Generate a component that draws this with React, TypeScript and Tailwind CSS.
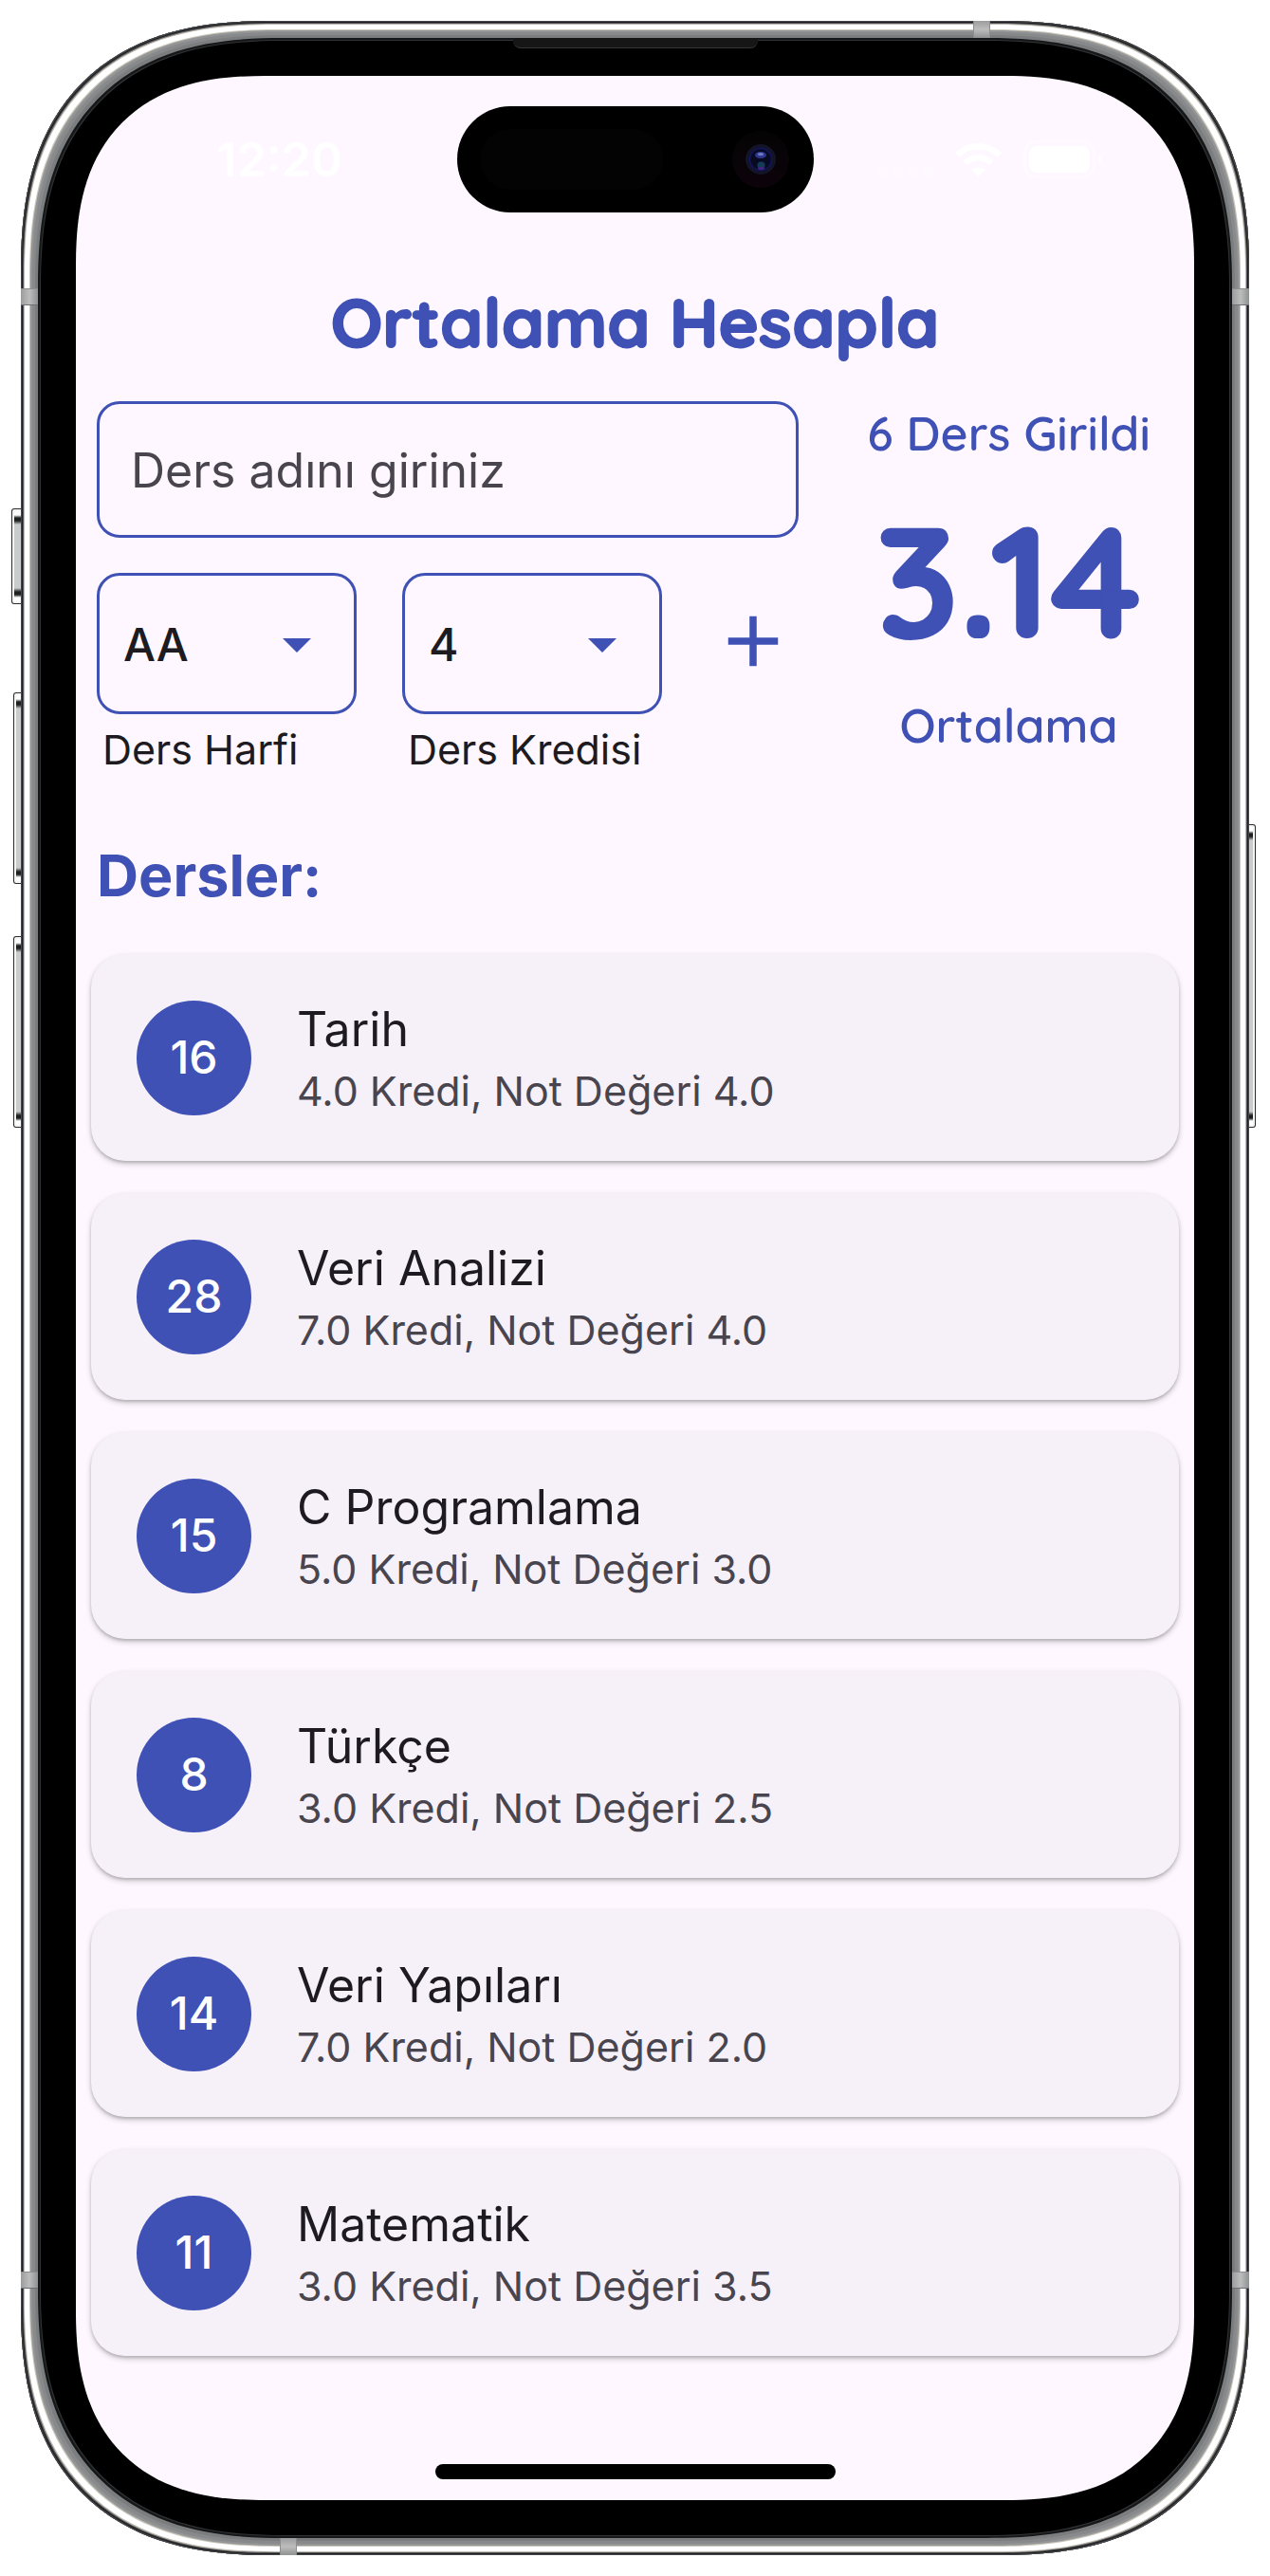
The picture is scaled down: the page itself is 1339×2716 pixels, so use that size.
import { useState } from "react";

type Course = { points: number; name: string; credit: string; grade: string };

const courses: Course[] = [
  { points: 16, name: "Tarih", credit: "4.0", grade: "4.0" },
  { points: 28, name: "Veri Analizi", credit: "7.0", grade: "4.0" },
  { points: 15, name: "C Programlama", credit: "5.0", grade: "3.0" },
  { points: 8, name: "Türkçe", credit: "3.0", grade: "2.5" },
  { points: 14, name: "Veri Yapıları", credit: "7.0", grade: "2.0" },
  { points: 11, name: "Matematik", credit: "3.0", grade: "3.5" },
];

const letters = ["AA", "BA", "BB", "CB", "CC", "DC", "DD", "FD", "FF"];
const credits = ["1", "2", "3", "4", "5", "6", "7", "8", "9", "10"];

/* Hardware drawn on the edge of the phone body */
function SideButton({ className }: { className: string }) {
  return (
    <div
      className={`absolute w-5 rounded-[3px] bg-[linear-gradient(to_bottom,#ffffff_0,#ffffff_7px,#1d1f20_10px,#1d1f20_13px,#c9cbcc_17px,#c9cbcc_calc(100%-17px),#1d1f20_calc(100%-13px),#1d1f20_calc(100%-10px),#ffffff_calc(100%-7px))] shadow-[inset_0_0_0_1px_#2c2c2c,inset_0_0_0_3px_#f4f4f2] ${className}`}
    />
  );
}

function Hardware() {
  const bandX = "absolute h-[18px] w-[18px] bg-[linear-gradient(to_right,#9b9c9d,#bdbdbd,#8f9192)] shadow-[inset_0_1px_0_#8e8e8e,inset_0_-1px_0_#6f7072]";
  const bandY = "absolute h-[18px] w-[18px] bg-[linear-gradient(to_bottom,#9b9c9d,#bdbdbd,#8f9192)] shadow-[inset_1px_0_0_#8e8e8e,inset_-1px_0_0_#8e8e8e]";
  return (
    <div aria-hidden="true">
      <div className={`${bandX} left-0 top-[282px]`} />
      <div className={`${bandX} right-0 top-[282px]`} />
      <div className={`${bandX} bottom-[281px] left-0`} />
      <div className={`${bandX} bottom-[281px] right-0`} />
      <div className={`${bandY} right-[273px] top-0`} />
      <div className={`${bandY} bottom-0 left-[273px]`} />
      <div className="absolute left-1/2 top-[19px] h-[10px] w-[258px] -translate-x-1/2 rounded-b-[8px] border-b border-[#383838] bg-[#161616]" />
    </div>
  );
}

function WifiIcon() {
  return (
    <svg viewBox="0 0 49 37" className="h-[37px] w-[49px]" fill="none" stroke="#fff" strokeWidth="6.5" aria-hidden="true">
      <path d="M2.3 13.4a31.5 31.5 0 0 1 44.4 0" />
      <path d="M10.6 21.9a19.7 19.7 0 0 1 27.8 0" />
      <path d="M24.500 36.500l-7-7.200a10 10 0 0 1 14 0z" fill="#fff" stroke="none" />
    </svg>
  );
}

function BatteryIcon() {
  return (
    <svg viewBox="0 0 84 40" className="h-10 w-[84px]" aria-hidden="true">
      <rect x="1.500" y="1.500" width="73" height="37" rx="12" fill="none" stroke="#fff" strokeOpacity=".4" strokeWidth="3" />
      <rect x="6" y="6" width="64" height="28" rx="8" fill="#fff" />
      <path d="M79 14c5 2 5 10 0 12z" fill="#fff" fillOpacity=".5" />
    </svg>
  );
}

function StatusBar() {
  return (
    <div className="grid grid-cols-[1fr_376px_1fr] items-center pt-8">
      <div className="pl-7 text-center text-[50px] leading-[60px] font-semibold text-white">12:20</div>
      <div className="flex h-28 items-center justify-between rounded-full bg-black pl-6 pr-[26px]">
        <div className="h-16 w-[193px] rounded-full bg-[#030303]" />
        <div className="grid size-[60px] place-items-center rounded-full bg-[linear-gradient(#040404,#0c030a)]">
          <svg viewBox="0 0 32 32" className="size-8" aria-hidden="true">
            <circle cx="16" cy="16" r="16" fill="#131427" />
            <circle cx="16" cy="16" r="11.500" fill="#080a24" stroke="#10155c" strokeWidth="1.500" />
            <ellipse cx="16" cy="11.500" rx="6" ry="3.500" fill="#2f388c" />
            <ellipse cx="16" cy="10.500" rx="3" ry="1.500" fill="#7078c8" />
            <circle cx="16.500" cy="22.500" r="4" fill="#123c58" />
            <ellipse cx="16.500" cy="25.500" rx="3.500" ry="1.500" fill="#4a1f86" />
          </svg>
        </div>
      </div>
      <div className="flex items-center justify-center gap-[23px] pr-7">
        <div className="flex gap-1.5 self-end pb-0.5">
          <span className="size-2.5 rounded-sm bg-white/30" />
          <span className="size-2.5 rounded-sm bg-white/30" />
          <span className="size-2.5 rounded-sm bg-white/30" />
          <span className="size-2.5 rounded-sm bg-white/30" />
        </div>
        <WifiIcon />
        <BatteryIcon />
      </div>
    </div>
  );
}

function Picker({ id, label, options, initial }: { id: string; label: string; options: string[]; initial: string }) {
  const [value, setValue] = useState(initial);
  return (
    <div className="flex-[274]">
      <div className="relative">
        <select
          id={id}
          value={value}
          onChange={(e) => setValue(e.target.value)}
          className="h-[149px] w-full appearance-none rounded-[24px] border-[3px] border-[#3f51b5] bg-transparent pt-[3px] pl-[25px] text-5xl font-medium text-[#1d1b20] outline-none"
        >
          {options.map((o) => (
            <option key={o}>{o}</option>
          ))}
        </select>
        <svg viewBox="0 0 30 15" className="pointer-events-none absolute right-12 top-[69px] h-[15px] w-[30px]" aria-hidden="true">
          <path d="M0 0h30L15 15z" fill="#3f51b5" />
        </svg>
      </div>
      <label htmlFor={id} className="mt-2 block pl-[6px] text-[43px] leading-[58px] whitespace-nowrap text-[#1d1b20]">
        {label}
      </label>
    </div>
  );
}

function CourseForm() {
  return (
    <form className="flex flex-col gap-[37px]" onSubmit={(e) => e.preventDefault()}>
      <input
        type="text"
        aria-label="Ders adı"
        placeholder="Ders adını giriniz"
        className="h-36 w-full rounded-[24px] border-[3px] border-[#3f51b5] bg-transparent pt-[2px] pl-[33px] text-[50px] text-[#1d1b20] outline-none placeholder:text-[#49454f]"
      />
      <div className="flex gap-12">
        <Picker id="harf" label="Ders Harfi" options={letters} initial="AA" />
        <Picker id="kredi" label="Ders Kredisi" options={credits} initial="4" />
        <button type="submit" aria-label="Ekle" className="flex h-36 flex-[96] items-center justify-center text-[#3f51b5]">
          <svg viewBox="0 0 24 24" className="size-[90px]" fill="currentColor" aria-hidden="true">
            <path d="M19 13h-6v6h-2v-6H5v-2h6V5h2v6h6z" />
          </svg>
        </button>
      </div>
    </form>
  );
}

function Average() {
  return (
    <div className="flex flex-col items-center pt-1 font-['Quicksand','Lato',sans-serif] whitespace-nowrap text-[#3f51b5]">
      <p className="text-[50px] leading-[60px] font-semibold">6 Ders Girildi</p>
      <p className="my-11 text-[164px] leading-[160px] font-bold [-webkit-text-stroke:2px_#3f51b5]">3.14</p>
      <p className="text-[50px] leading-[60px] font-semibold">Ortalama</p>
    </div>
  );
}

function CourseCard({ course }: { course: Course }) {
  return (
    <li className="flex h-[218px] items-center gap-12 rounded-[36px] bg-[#f6f1f9] px-12 shadow-[0_3px_6px_rgba(0,0,0,0.2),0_2px_3px_rgba(0,0,0,0.15)]">
      <div className="grid size-[121px] shrink-0 place-items-center rounded-full bg-[#3f51b5] text-5xl font-medium text-white">
        {course.points}
      </div>
      <div>
        <h3 className="text-[50px] leading-[70px] text-[#1d1b20]">{course.name}</h3>
        <p className="text-[43px] leading-[60px] text-[#49454f]">
          {course.credit} Kredi, Not Değeri {course.grade}
        </p>
      </div>
    </li>
  );
}

export default function App() {
  return (
    <div className="min-h-screen bg-white px-[22px] pt-[22px] pb-[23px] font-['Inter',sans-serif]">
      <div className="relative">
        <SideButton className="-left-[10px] top-[514px] h-[101px]" />
        <SideButton className="-left-2 top-[708px] h-[202px]" />
        <SideButton className="-left-2 top-[965px] h-[202px]" />
        <SideButton className="-right-[7px] top-[847px] h-[320px]" />
        <div className="relative rounded-[225px] bg-black p-[58px] shadow-[inset_0_0_0_1px_#45474a,inset_0_0_0_2px_#1e2021,inset_0_0_0_3px_#55565a,inset_0_0_0_4px_#bdb9ae,inset_0_0_0_9px_#ffffff,inset_0_0_0_10px_#c9c5b8,inset_0_0_0_12px_#939597,inset_0_0_0_15px_#88898b,inset_0_0_0_18px_#7b7d7f,inset_0_0_0_20px_#161718,inset_0_0_0_21px_#303233] [corner-shape:superellipse(1.3)] supports-[corner-shape:squircle]:rounded-[265px]">
          <Hardware />
          <main className="rounded-[168px] bg-[#fef7ff] pb-[22px] [corner-shape:superellipse(1.3)] supports-[corner-shape:squircle]:rounded-[200px]">
            <StatusBar />
            <div className="px-[22px]">
              <h1 className="mt-[70px] text-center font-['Quicksand','Lato',sans-serif] text-7xl leading-[90px] font-bold text-[#3f51b5] [-webkit-text-stroke:2px_#3f51b5]">
                Ortalama Hesapla
              </h1>
              <section className="mt-[39px] grid grid-cols-[740fr_347fr] gap-12">
                <CourseForm />
                <Average />
              </section>
              <h2 className="mt-[68px] text-[61px] leading-[72px] font-bold text-[#3f51b5]">Dersler:</h2>
            </div>
            <ul className="mt-[47px] flex flex-col gap-[34px] px-4">
              {courses.map((c) => (
                <CourseCard key={c.name} course={c} />
              ))}
            </ul>
            <div className="mx-auto mt-[114px] h-4 w-[422px] rounded-full bg-black" />
          </main>
        </div>
      </div>
    </div>
  );
}
